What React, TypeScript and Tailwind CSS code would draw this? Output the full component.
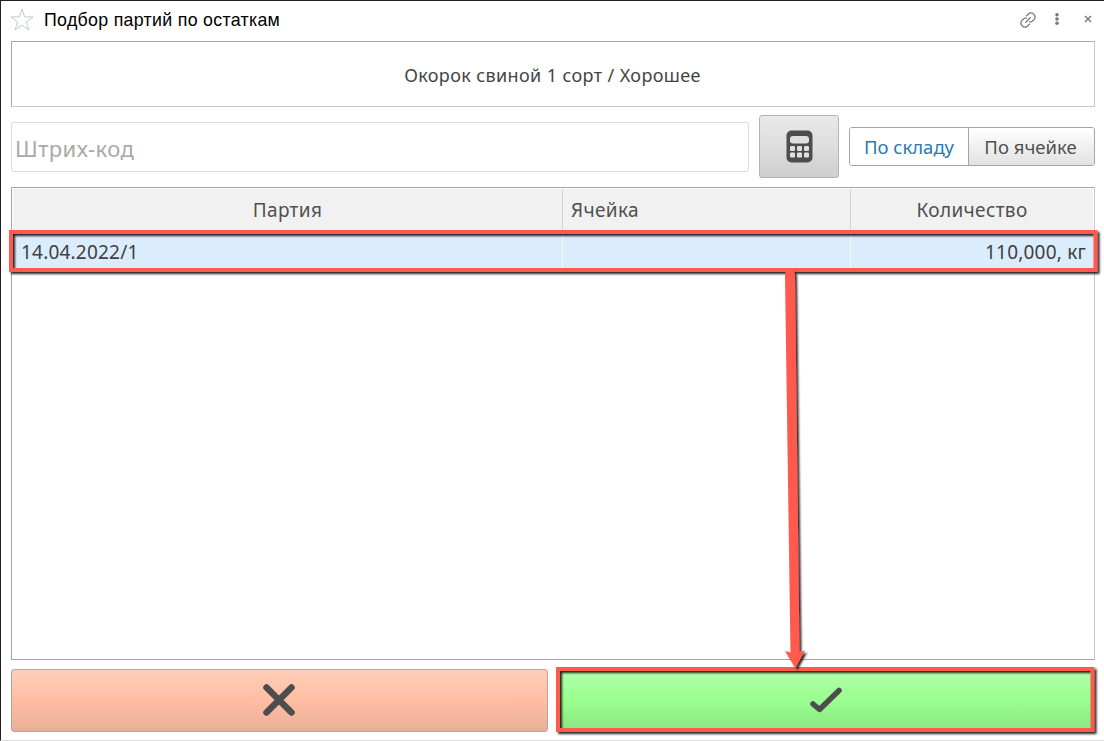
import React from "react";

function StarIcon() {
  return (
    <svg className="h-6 w-6" viewBox="0 0 24 24" fill="none" stroke="#c3cad1" strokeWidth="1">
      <path d="M12 1.2 14.6 8.9H23L16.3 13.8 19 22 12 17 5 22 7.7 13.8 1 8.9H9.4Z" />
    </svg>
  );
}

function LinkIcon() {
  return (
    <svg className="h-4 w-4" viewBox="0 0 16 16" fill="none" stroke="#777" strokeWidth="1.3" strokeLinecap="round">
      <path d="M5.8 10.2 10.2 5.8" />
      <path d="M6.6 3.9 8.4 2A3.6 3.6 0 0 1 13.8 2.2 3.6 3.6 0 0 1 14 7.6L12 9.5Q11 10.2 9.6 9.8" />
      <path d="M6.4 6.2Q5 5.8 4 6.5L2 8.4A3.6 3.6 0 0 0 2.2 13.8 3.6 3.6 0 0 0 7.6 14L9.4 12.1" />
    </svg>
  );
}

function CalculatorIcon() {
  return (
    <svg className="h-[33px] w-[27px]" viewBox="0 0 27 33">
      <rect x="0.5" y="0.5" width="26" height="32" rx="5" fill="#4d4d4d" />
      <g fill="#e0e0e0">
        <rect x="4" y="6" width="19" height="7.5" rx="3" />
        {[16, 22.5].map((y) =>
          [4, 11, 18].map((x) => <rect key={`${x}-${y}`} x={x} y={y} width="5" height="5" rx="1.2" />)
        )}
      </g>
    </svg>
  );
}

function Callouts() {
  return (
    <svg className="pointer-events-none absolute inset-0 h-[741px] w-[1104px]" viewBox="0 0 1104 741">
      <defs>
        <filter id="shade" filterUnits="userSpaceOnUse" x="0" y="0" width="1104" height="741">
          <feDropShadow dx="2" dy="2" stdDeviation="1.3" floodColor="#000" floodOpacity="0.85" />
        </filter>
      </defs>
      <g filter="url(#shade)">
        <rect x="11" y="232" width="1084.5" height="38" fill="none" stroke="#ff5a4d" strokeWidth="4" />
      </g>
      <g filter="url(#shade)">
        <rect x="558" y="669" width="534.5" height="61" fill="none" stroke="#ff5a4d" strokeWidth="4" />
      </g>
      <g filter="url(#shade)" fill="#ff5a4d">
        <path d="M785 275Q785 270 790 270T795 275L799.5 652 805 650.5 795.5 668 785 651 790.5 652.5Z" />
      </g>
    </svg>
  );
}

export default function App() {
  return (
    <div className="relative flex h-[741px] w-[1104px] flex-col overflow-hidden border-b border-l border-t border-b-[#ddd] border-l-[#231f20] border-t-[#231f20] bg-white pl-2.5 pr-[9px] font-['Noto_Sans','Open_Sans',sans-serif] text-[#505050]">
      <header className="flex h-10 shrink-0 items-center pb-0.5">
        <div className="-ml-px">
          <StarIcon />
        </div>
        <h1 className="ml-2.5 whitespace-nowrap font-['Liberation_Sans',sans-serif] text-[17.8px] tracking-[0.3px] text-black">
          Подбор партий по остаткам
        </h1>
        <div className="ml-auto mr-[3px] flex items-center">
          <LinkIcon />
          <svg className="ml-[19px] h-3 w-1 -translate-y-px" viewBox="0 0 4 12" fill="#777">
            <circle cx="2" cy="1.8" r="1.8" />
            <circle cx="2" cy="6" r="1.8" />
            <circle cx="2" cy="10.2" r="1.8" />
          </svg>
          <svg className="ml-[25px] h-2 w-2 -translate-y-px" viewBox="0 0 8 8" stroke="#777" strokeWidth="1.4">
            <path d="M1 1 7 7M7 1 1 7" />
          </svg>
        </div>
      </header>

      <div className="flex h-[66px] shrink-0 items-center justify-center border border-[#a8a8a8] border-b-[#c8c8c8] border-r-[#c8c8c8] pr-px pt-0.5 text-[18px] tracking-[0.38px] text-[#444]">
        <span className="whitespace-nowrap">Окорок свиной 1 сорт / Хорошее</span>
      </div>

      <div className="mt-2 flex h-[63px] shrink-0 items-center">
        <div className="flex h-[50px] w-[738px] items-center rounded-[3px] border border-[#dadada] pl-[3px] pt-[3px] text-[22px] tracking-[0.4px] text-[#a9a9a9]">
          Штрих-код
        </div>
        <button className="ml-2.5 flex h-[63px] w-20 items-center justify-center rounded-[3px] border border-[#b3b3b3] bg-linear-to-b from-[#e9e9e9] via-[#dedede] to-[#cecece]">
          <CalculatorIcon />
        </button>
        <div className="ml-2.5 flex h-[39px] w-[246px] overflow-hidden rounded-[3px] border border-[#a5a5a5] text-[18.5px]">
          <button className="w-[119px] whitespace-nowrap border-r border-[#a5a5a5] bg-white text-[#2878be]">
            По складу
          </button>
          <button className="flex-1 whitespace-nowrap bg-linear-to-b from-white to-[#e2e2e2] pr-0.5">По ячейке</button>
        </div>
      </div>

      <div className="mt-[9px] flex h-[473px] shrink-0 flex-col border border-[#a5a5a5] border-r-[#c8c8c8] text-[19px]">
        <div className="grid h-[43px] grid-cols-[550px_288px_1fr] border border-b-0 border-white bg-[#f1f1f1] tracking-[0.35px]">
          <div className="flex items-center justify-center border-r border-[#d4d4d4]">Партия</div>
          <div className="flex items-center border-r border-[#d4d4d4] pl-2">Ячейка</div>
          <div className="flex items-center justify-center">Количество</div>
        </div>
        <div className="grid h-10 grid-cols-[551px_288px_1fr] bg-[#dbedfc] tracking-[0.2px] text-[#404040]">
          <div className="flex items-center border-r border-[#f4faff] pl-[9px] pt-0.5">14.04.2022/1</div>
          <div className="border-r border-[#f4faff]" />
          <div className="flex items-center justify-end pr-2 pt-0.5">110,000, кг</div>
        </div>
      </div>

      <div className="mt-[9px] flex h-[63px] shrink-0 gap-2.5">
        <button className="flex flex-1 items-center justify-center rounded-[3px] border border-[#b9a49b] bg-linear-to-b from-[#ffceba] via-[#ffbea3] to-[#eaae98] pb-0.5 pr-0.5">
          <svg className="h-8 w-8" viewBox="0 0 32 32" stroke="#4d4d4d" strokeWidth="6.5" strokeLinecap="round">
            <path d="M3.5 3.5 28.5 28.5M28.5 3.5 3.5 28.5" />
          </svg>
        </button>
        <button className="flex flex-1 items-center justify-center rounded-[3px] border border-[#93b98c] bg-linear-to-b from-[#b0ffa6] via-[#99ff8f] to-[#8ae581] pb-0.5 pr-0.5">
          <svg className="h-[26px] w-8" viewBox="0 0 32 26" fill="none" stroke="#4d4d4d" strokeWidth="5.5" strokeLinecap="round" strokeLinejoin="round">
            <path d="M3 17 9.5 22.5 29 3.5" />
          </svg>
        </button>
      </div>
      <div className="absolute -left-px -top-px">
        <Callouts />
      </div>
    </div>
  );
}
